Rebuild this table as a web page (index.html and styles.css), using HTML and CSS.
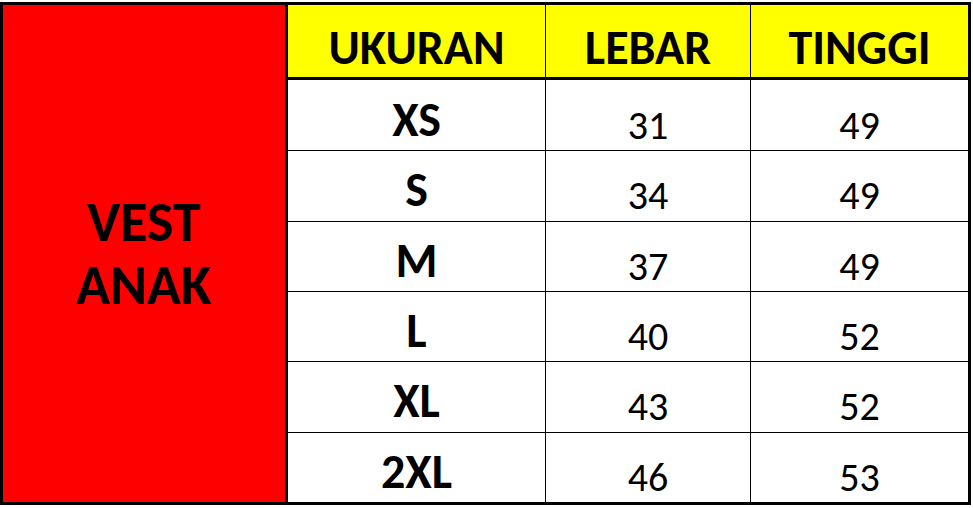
FILE: index.html
```html
<!DOCTYPE html>
<html lang="id">
<head>
<meta charset="utf-8">
<title>Vest Anak</title>
<link rel="stylesheet" href="styles.css">
</head>
<body>
<div class="chart">
  <div class="title"><span>VEST<br>ANAK</span></div>
  <div class="head">UKURAN</div>
  <div class="head sep">LEBAR</div>
  <div class="head sep">TINGGI</div>

  <div class="size first">XS</div><div class="num sep first">31</div><div class="num sep first">49</div>
  <div class="size">S</div><div class="num sep">34</div><div class="num sep">49</div>
  <div class="size">M</div><div class="num sep">37</div><div class="num sep">49</div>
  <div class="size">L</div><div class="num sep">40</div><div class="num sep">52</div>
  <div class="size">XL</div><div class="num sep">43</div><div class="num sep">52</div>
  <div class="size">2XL</div><div class="num sep">46</div><div class="num sep">53</div>
</div>
</body>
</html>
```

FILE: styles.css
```css
html, body {
  margin: 0;
  padding: 0;
  background: #ffffff;
}

body {
  padding-top: 2px;
  font-family: "Carlito", "Lato", "Open Sans", sans-serif;
  color: #000000;
}

.chart {
  box-sizing: border-box;
  width: 971px;
  height: 503px;
  border: 3px solid #000000;
  display: grid;
  grid-template-columns: 285px 257px 205px 218px;
  grid-template-rows: 75px repeat(6, 1fr);
}

.title {
  grid-row: 1 / -1;
  grid-column: 1;
  background: #ff0000;
  border-right: 3px solid #000000;
  display: flex;
  align-items: center;
  justify-content: center;
  text-align: center;
  font-weight: bold;
  font-size: 56px;
  line-height: 63px;
}

.head {
  background: #ffff00;
  border-bottom: 3px solid #000000;
  display: flex;
  align-items: center;
  justify-content: center;
  font-weight: bold;
  font-size: 48px;
  padding-top: 12px;
  box-sizing: border-box;
}

.sep {
  border-left: 1px solid #000000;
}

.size, .num {
  display: flex;
  align-items: center;
  justify-content: center;
  border-top: 1px solid #000000;
  box-sizing: border-box;
}

.first {
  border-top: none;
}

.size {
  font-weight: bold;
  font-size: 48px;
  padding-top: 8px;
}

.num {
  font-size: 40px;
  padding-top: 20px;
}
```
